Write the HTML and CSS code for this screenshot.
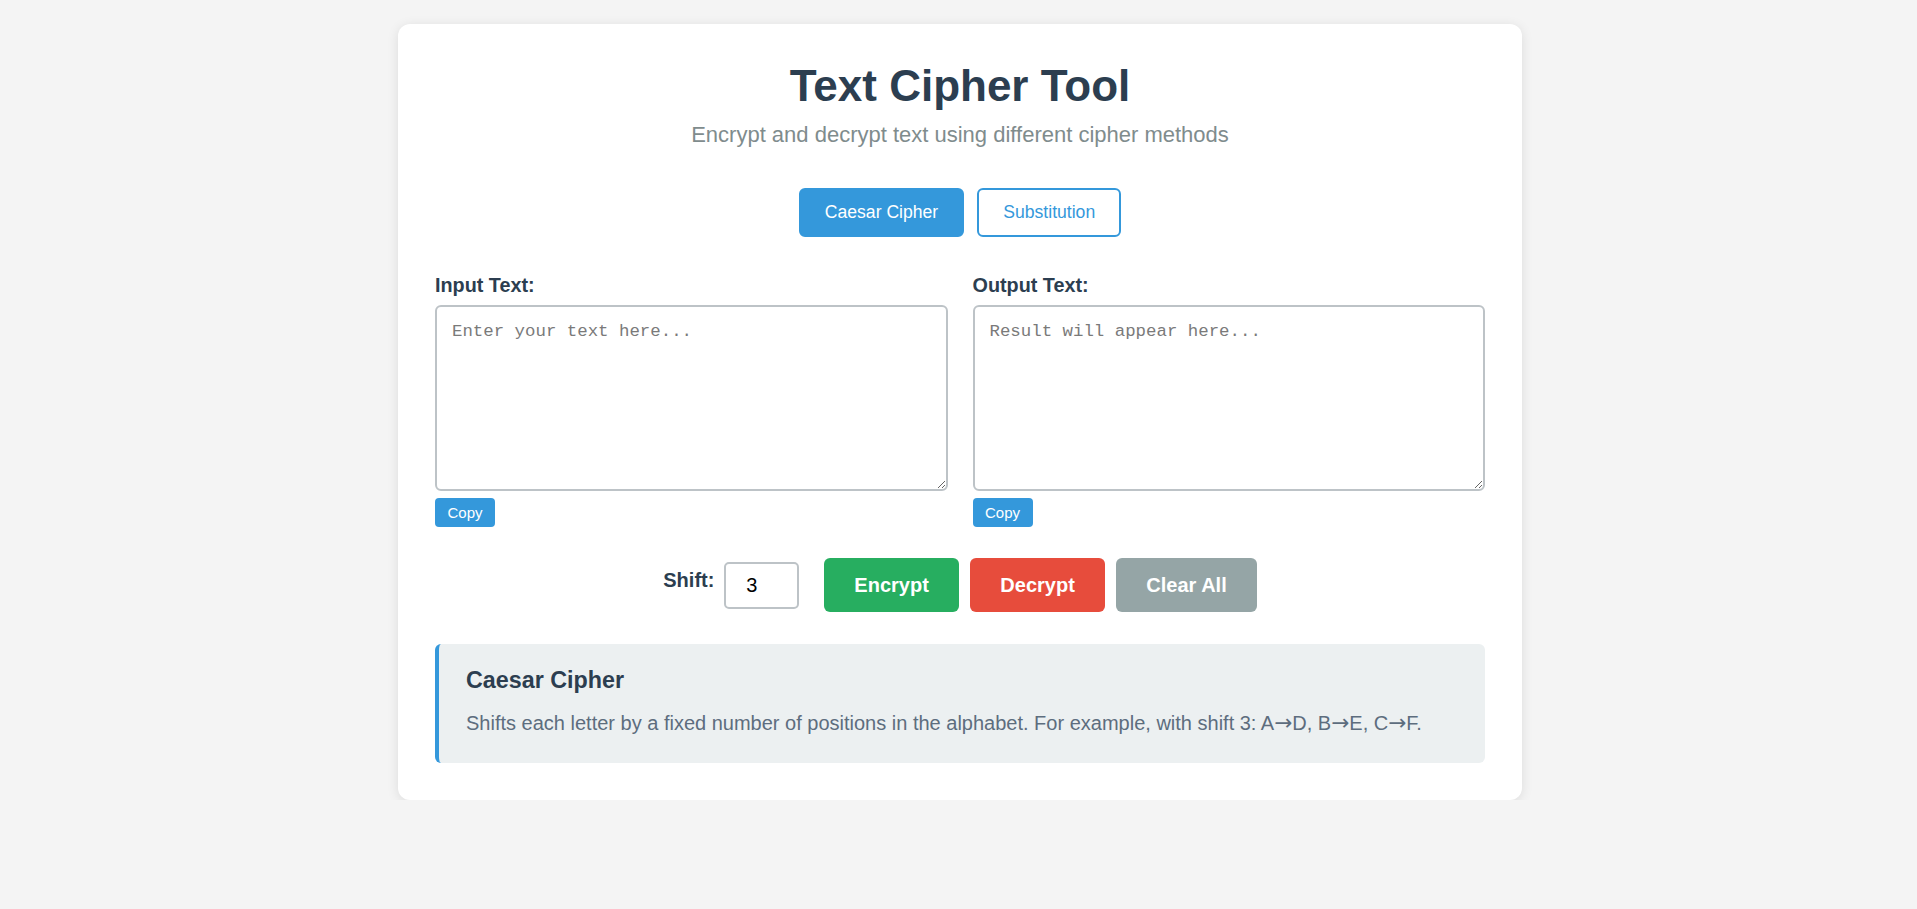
FILE: index.html
```html
<!DOCTYPE html>
<html lang="en">
<head>
<meta charset="utf-8">
<title>Text Cipher Tool</title>
<link rel="stylesheet" href="styles.css">
</head>
<body>
<main class="card">
  <header class="head">
    <h1 class="title">Text Cipher Tool</h1>
    <p class="subtitle">Encrypt and decrypt text using different cipher methods</p>
  </header>

  <nav class="tabs">
    <button class="tab tab-active" type="button">Caesar Cipher</button>
    <button class="tab" type="button">Substitution</button>
  </nav>

  <section class="panes">
    <div class="pane">
      <label class="pane-label" for="input">Input Text:</label>
      <textarea id="input" class="text-area" placeholder="Enter your text here..."></textarea>
      <button class="copy-btn" type="button">Copy</button>
    </div>
    <div class="pane">
      <label class="pane-label" for="output">Output Text:</label>
      <textarea id="output" class="text-area" placeholder="Result will appear here..." readonly></textarea>
      <button class="copy-btn" type="button">Copy</button>
    </div>
  </section>

  <section class="actions">
    <label class="shift-label" for="shift">Shift:</label>
    <input id="shift" class="shift-input" type="text" value="3">
    <button class="action action-encrypt" type="button">Encrypt</button>
    <button class="action action-decrypt" type="button">Decrypt</button>
    <button class="action action-clear" type="button">Clear All</button>
  </section>

  <section class="info">
    <h3 class="info-title">Caesar Cipher</h3>
    <p class="info-text">Shifts each letter by a fixed number of positions in the alphabet. For example, with shift 3: A<span class="arrow">→</span>D, B<span class="arrow">→</span>E, C<span class="arrow">→</span>F.</p>
  </section>
</main>
</body>
</html>
```

FILE: styles.css
```css
* {
  box-sizing: border-box;
}

html, body {
  margin: 0;
}

body {
  background: #f4f4f4;
  font-family: "Liberation Sans", Arial, sans-serif;
  color: #2c3e50;
  padding: 24px 0 0 3px;
}

.card {
  width: 1124px;
  margin: 0 auto;
  background: #ffffff;
  border-radius: 12px;
  box-shadow: 0 2px 12px rgba(0, 0, 0, 0.1);
  padding: 37px 37px 37px;
}

.head {
  text-align: center;
}

.title {
  margin: 0;
  font-size: 44px;
  font-weight: 700;
  color: #2c3e50;
  line-height: 49px;
}

.subtitle {
  margin: 12px 0 0;
  font-size: 22px;
  line-height: 25px;
  color: #7f8c8d;
}

.tabs {
  display: flex;
  justify-content: center;
  gap: 13px;
  margin-top: 41px;
}

.tab {
  font-family: "Liberation Sans", Arial, sans-serif;
  font-size: 17.6px;
  line-height: 21px;
  padding: 12px 24px;
  border: 2px solid #3498db;
  border-radius: 6px;
  background: #ffffff;
  color: #3498db;
  cursor: pointer;
}

.tab-active {
  background: #3498db;
  color: #ffffff;
}

.panes {
  display: grid;
  grid-template-columns: 1fr 1fr;
  gap: 25px;
  margin-top: 37px;
}

.pane {
  display: flex;
  flex-direction: column;
  align-items: flex-start;
}

.pane-label {
  font-size: 19.8px;
  line-height: 22px;
  font-weight: 700;
  color: #2c3e50;
  margin-bottom: 9px;
}

.text-area {
  display: block;
  width: 100%;
  height: 186px;
  padding: 15px;
  border: 2px solid #bdc3c7;
  border-radius: 6px;
  font-family: "Liberation Mono", "Courier New", monospace;
  font-size: 17.4px;
  color: #2c3e50;
  background: #ffffff;
}

.text-area::placeholder {
  color: #7a7a7a;
}

.copy-btn {
  margin-top: 7px;
  font-family: "Liberation Sans", Arial, sans-serif;
  font-size: 15px;
  line-height: 17px;
  padding: 6px 12.5px;
  border: none;
  border-radius: 4px;
  background: #3498db;
  color: #ffffff;
  cursor: pointer;
}

.actions {
  display: flex;
  justify-content: center;
  align-items: center;
  margin-top: 31px;
}

.shift-label {
  font-size: 20px;
  line-height: 23px;
  font-weight: 700;
  color: #2c3e50;
  margin-right: 10px;
  margin-bottom: 9px;
}

.shift-input {
  width: 75px;
  height: 47px;
  padding: 0 10px 0 20px;
  border: 2px solid #bdc3c7;
  border-radius: 5px;
  font-family: "Liberation Sans", Arial, sans-serif;
  font-size: 20px;
  color: #000000;
  margin-right: 25px;
}

.action {
  font-family: "Liberation Sans", Arial, sans-serif;
  font-size: 20px;
  font-weight: 700;
  line-height: 23px;
  padding: 15.5px 30px;
  border: none;
  border-radius: 6px;
  color: #ffffff;
  cursor: pointer;
}

.action + .action {
  margin-left: 11.5px;
}

.action-encrypt {
  background: #27ae60;
}

.action-decrypt {
  background: #e74c3c;
}

.action-clear {
  background: #95a5a6;
}

.info {
  margin-top: 31.5px;
  background: #ecf0f1;
  border-left: 4px solid #3498db;
  border-radius: 6px;
  padding: 23px 27px 29px;
}

.info-title {
  margin: 0 0 18px;
  font-size: 23.3px;
  line-height: 27px;
  font-weight: 700;
  color: #2c3e50;
}

.info-text {
  margin: 0;
  font-size: 20px;
  line-height: 22px;
  color: #5d6d7e;
}

.arrow {
  font-family: "DejaVu Sans", sans-serif;
  font-size: 1.08em;
  line-height: 1;
}
```
